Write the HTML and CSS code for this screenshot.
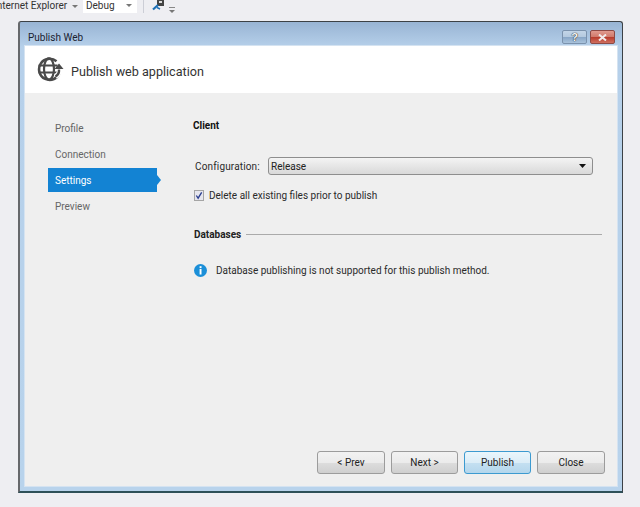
FILE: index.html
```html
<!DOCTYPE html>
<html lang="en">
<head>
<meta charset="utf-8">
<title>Publish Web</title>
<link rel="stylesheet" href="styles.css">
</head>
<body>
<div class="toolbar">
  <span class="tb-text tb-browser">Internet Explorer</span>
  <svg class="tb-caret" width="6" height="3" viewBox="0 0 6 3"><path d="M0 0h6L3 3z" fill="#777"/></svg>
  <div class="tb-combo"><span class="tb-text">Debug</span><svg width="6" height="3" viewBox="0 0 6 3"><path d="M0 0h6L3 3z" fill="#777"/></svg></div>
  <div class="tb-sep"></div>
  <svg class="tb-icon" width="13" height="11" viewBox="0 0 13 11"><rect x="5" y="0" width="7" height="6" fill="#444"/><rect x="7" y="1" width="3" height="2" fill="#ddd"/><path d="M1 9.5 6 5" stroke="#1c6fb5" stroke-width="2.2" fill="none"/><path d="M5 7.5 8 9" stroke="#1c6fb5" stroke-width="1.4"/></svg>
  <svg class="tb-more" width="6" height="6" viewBox="0 0 6 6"><path d="M0 0h6v1H0z" fill="#888"/><path d="M0 3h6L3 6z" fill="#777"/></svg>
</div>

<div class="window">
  <div class="titlebar">
    <span class="title">Publish Web</span>
    <div class="caption-btns">
      <div class="cap cap-help">?</div>
      <div class="cap cap-close"><svg width="9" height="7" viewBox="0 0 9 7"><path d="M1 .5 8 6.5M8 .5 1 6.5" stroke="#f1eaea" stroke-width="2" fill="none"/></svg></div>
    </div>
  </div>
  <div class="client">
    <header class="banner">
      <svg class="globe" width="27" height="25" viewBox="0 0 27 25">
        <g fill="none" stroke="#4a4a4a">
          <path d="M19.500 4.200A10.600 10.600 0 1 0 22.800 15.500" stroke-width="2.600"/>
          <ellipse cx="12" cy="12" rx="5" ry="10.600" stroke-width="2.200"/>
          <path d="M1.500 8.500h19M1.500 15.500h19" stroke-width="2.200"/>
        </g>
        <path d="M18.500 19.500c3-1.500 4-4 3.800-7" fill="none" stroke="#fff" stroke-width="5"/>
        <path d="M18.500 19.500c2.500-1.500 3.800-4 3.500-7" fill="none" stroke="#4a4a4a" stroke-width="2.400"/>
        <path d="M17.500 12 22 6.500 26.500 12z" fill="#4a4a4a"/>
      </svg>
      <h1>Publish web application</h1>
    </header>
    <div class="body">
      <nav class="nav">
        <a class="nav-item">Profile</a>
        <a class="nav-item">Connection</a>
        <a class="nav-item active">Settings</a>
        <a class="nav-item">Preview</a>
      </nav>
      <main class="panel">
        <h2 class="client-head">Client</h2>
        <div class="config-row">
          <label class="config-label">Configuration:</label>
          <div class="select"><span>Release</span><svg width="7" height="4" viewBox="0 0 7 4"><path d="M0 0h7L3.500 4z" fill="#111"/></svg></div>
        </div>
        <div class="check-row">
          <span class="checkbox"><svg width="9" height="9" viewBox="0 0 9 9"><path d="M1.500 4.500 3.500 7.500 7.500 1" stroke="#2b3f8f" stroke-width="1.500" fill="none"/></svg></span>
          <span>Delete all existing files prior to publish</span>
        </div>
        <div class="db-head"><h3>Databases</h3><div class="rule"></div></div>
        <div class="info-row">
          <svg class="info" width="13" height="13" viewBox="0 0 13 13"><circle cx="6.500" cy="6.500" r="6.500" fill="#1b8fd8"/><rect x="5.600" y="2.200" width="1.900" height="1.900" fill="#fff"/><rect x="5.600" y="5" width="1.900" height="5.500" fill="#fff"/></svg>
          <span>Database publishing is not supported for this publish method.</span>
        </div>
      </main>
    </div>
    <footer class="footer">
      <button class="btn">&lt; Prev</button>
      <button class="btn">Next &gt;</button>
      <button class="btn primary">Publish</button>
      <button class="btn">Close</button>
    </footer>
  </div>
</div>
</body>
</html>
```

FILE: styles.css
```css
* { box-sizing: border-box; }
html, body { margin: 0; height: 100%; }
body {
  width: 640px;
  height: 507px;
  overflow: hidden;
  background: #eeeef2;
  font-family: Roboto, "Noto Sans", sans-serif;
  font-size: 10px;
  color: #2a2a2a;
}
.toolbar {
  height: 21px;
  display: flex;
  align-items: flex-start;
  overflow: hidden;
}
.tb-text { font-size: 10px; line-height: 12px; color: #333; white-space: nowrap; }
.tb-browser { margin-left: -6px; width: 78px; }
.tb-caret { margin: 5px 0 0 0; }
.tb-combo {
  margin-left: 5px;
  width: 54px;
  height: 13px;
  background: #fff;
  display: flex;
  align-items: flex-start;
  justify-content: space-between;
  padding: 0 5px 0 3px;
}
.tb-combo svg { margin-top: 4px; }
.tb-sep { width: 1px; height: 13px; background: #ccced6; margin-left: 6px; }
.tb-icon { margin: 0 0 0 8px; }
.tb-more { margin: 7px 0 0 4px; }

.window {
  margin-left: 18px;
  width: 605px;
  height: 472px;
  background: linear-gradient(#98b4d4 0, #b6d0ea 25px, #b8d3ec 100%);
  border: 1px solid #3c4146;
  border-left: 2px solid #66686c;
  border-bottom: 2px solid #2e5058;
  border-radius: 3px 3px 0 0;
  display: flex;
  flex-direction: column;
  padding: 0 5px 5px 5px;
}
.titlebar {
  height: 24px;
  flex: none;
  display: flex;
  align-items: flex-start;
  justify-content: space-between;
}
.title { font-size: 10px; line-height: 14px; margin: 9px 0 0 3px; color: #1a2230; }
.caption-btns { display: flex; gap: 3px; margin: 8px 2px 0 0; }
.cap {
  height: 14px;
  border-radius: 2px;
  display: flex;
  align-items: center;
  justify-content: center;
}
.cap-help {
  width: 25px;
  border: 1px solid #7b92ad;
  background: linear-gradient(#c3d5e8 0, #b4c9df 50%, #88a5c6 51%, #a9c3dc 100%);
  color: #f4f6f8;
  font: bold 11px/12px "Liberation Sans", sans-serif;
  text-shadow: 0 0 1px #222, 0 0 1px #222;
}
.cap-close {
  width: 25px;
  border: 1px solid #8d4a45;
  background: linear-gradient(#e09a8e 0, #d07a6c 48%, #b83c2c 52%, #cf6f60 100%);
}
.client {
  flex: 1;
  min-height: 0;
  display: flex;
  flex-direction: column;
  background: #efefef;
  box-shadow: 0 0 0 1px #d5e3f1;
}
.banner {
  height: 47px;
  flex: none;
  background: #fff;
  display: flex;
  align-items: center;
  padding-left: 12px;
}
.globe { flex: none; }
h1 { margin: 3px 0 0 7px; font-size: 12.6px; font-weight: 400; color: #333; }
.body { flex: 1; min-height: 0; display: flex; }
.nav {
  width: 168px;
  flex: none;
  padding: 23px 0 0 23px;
  display: flex;
  flex-direction: column;
  gap: 2px;
}
.nav-item {
  position: relative;
  width: 109px;
  height: 24px;
  line-height: 25px;
  padding-left: 7px;
  color: #666;
}
.nav-item.active { background: #1383d3; color: #fff; }
.nav-item.active::after {
  content: "";
  position: absolute;
  left: 100%;
  top: 7px;
  border-left: 4px solid #1383d3;
  border-top: 5px solid transparent;
  border-bottom: 5px solid transparent;
}
.panel { flex: 1; padding-top: 25px; min-width: 0; }
.client-head { margin: 0; font-size: 10px; font-weight: 700; line-height: 16px; color: #111; }
.config-row { display: flex; align-items: center; height: 18px; margin: 23px 0 0 2px; }
.config-label { width: 73px; flex: none; letter-spacing: .15px; }
.select {
  width: 325px;
  height: 18px;
  border: 1px solid #8e8e8e;
  border-radius: 3px;
  background: linear-gradient(#f4f4f4, #e6e6e6 50%, #d9d9d9);
  display: flex;
  align-items: center;
  justify-content: space-between;
  padding: 0 6px 0 2px;
  color: #222;
}
.check-row { display: flex; align-items: center; gap: 5px; margin: 12px 0 0 1px; height: 16px; }
.checkbox {
  width: 10px;
  height: 11px;
  border: 1px solid #a5a5a5;
  background: #e6e6ee;
  display: flex;
  align-items: center;
  justify-content: center;
}
.db-head { display: flex; align-items: center; gap: 5px; margin: 23px 15px 0 1px; height: 16px; }
.db-head h3 { margin: 0; font-size: 10px; font-weight: 700; color: #222; }
.rule { flex: 1; height: 1px; background: #aaa; }
.info-row { display: flex; align-items: center; gap: 9px; margin: 20px 0 0 1px; height: 16px; }
.info { flex: none; }
.footer {
  flex: none;
  display: flex;
  justify-content: flex-end;
  gap: 6px;
  padding: 0 12px 12px 0;
}
.btn {
  width: 67px;
  height: 23px;
  padding: 0;
  border: 1px solid #9c9c9c;
  border-radius: 3px;
  background: linear-gradient(#f2f2f2, #ebebeb 50%, #dddddd 51%, #cfcfcf);
  font: inherit;
  color: #222;
}
.btn:first-child, .btn:last-child { width: 68px; }
.btn.primary {
  border-color: #3c9ad0;
  background: linear-gradient(#eaf6fc, #dcedf7 50%, #c4e0f1 51%, #b4d6ec);
}
```
